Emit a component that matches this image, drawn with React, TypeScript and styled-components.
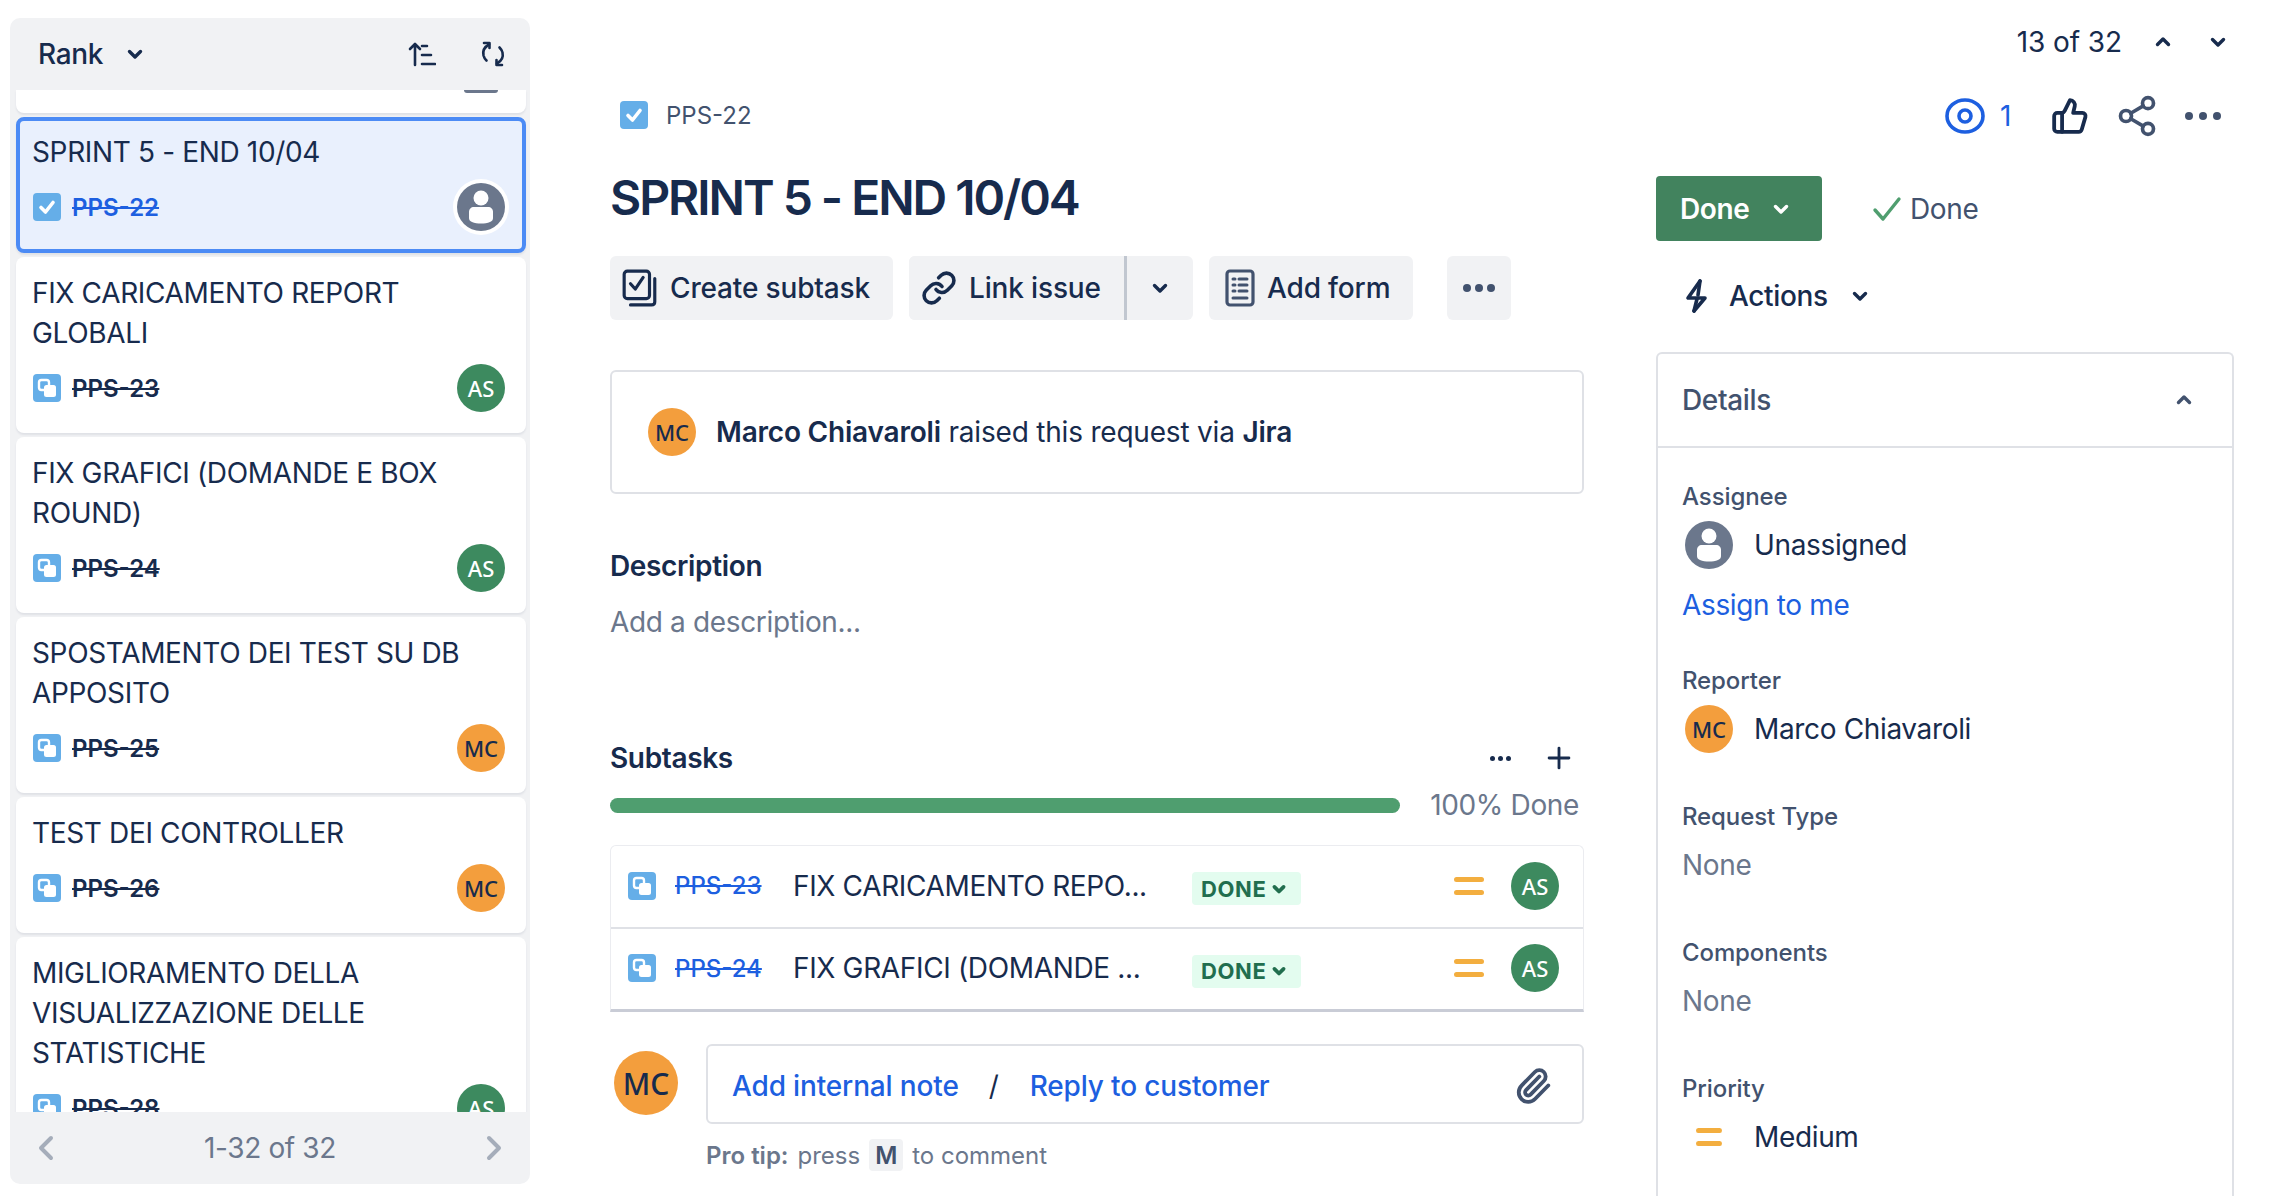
import React from "react";
import styled, { createGlobalStyle } from "styled-components";
import { Link as LinkIcon, Paperclip, Plus, Share2, ThumbsUp } from "lucide-react";

const navy = "#172b4d";
const slate = "#42526e";
const grey = "#6b778c";
const blue = "#1d5fe0";

const GlobalStyle = createGlobalStyle`
  html, body {
    margin: 0;
    height: 100%;
    background: #ffffff;
    overflow: hidden;
  }
  body {
    font-family: Inter, "Liberation Sans", sans-serif;
    color: ${navy};
    letter-spacing: -0.35px;
  }
`;

const Page = styled.div`
  display: flex;
  width: 2292px;
  height: 1196px;
  overflow: hidden;
`;

const Sidebar = styled.aside`
  width: 520px;
  height: 1166px;
  margin: 18px 0 0 10px;
  display: flex;
  flex-direction: column;
  flex: none;
  background: #f1f2f4;
  border-radius: 10px;
  overflow: hidden;
`;

const SideHeader = styled.div`
  height: 72px;
  flex: none;
  display: flex;
  align-items: center;
  padding: 0 24px 0 28px;
  font-size: 28px;
  color: ${navy};
`;

const SortButton = styled.div`
  display: flex;
  align-items: center;
  gap: 20px;
  font-weight: 500;
  margin-right: auto;
`;

const HeaderIcons = styled.div`
  display: flex;
  align-items: center;
  gap: 44px;
`;

const CardScroller = styled.div`
  flex: 1;
  min-height: 0;
  overflow: hidden;
  display: flex;
  flex-direction: column;
  gap: 4px;
  padding: 0 4px 0 6px;
`;

const PartialCard = styled.div`
  height: 23px;
  flex: none;
  background: #fff;
  border-radius: 0 0 8px 8px;
  box-shadow: 0 2px 2px #dfe1e6;
  display: flex;
  justify-content: flex-end;
  padding-right: 28px;
`;

const PartialAvatar = styled.div`
  width: 34px;
  height: 3px;
  background: ${grey};
  border-radius: 0 0 17px 17px;
`;

const Card = styled.div<{ $selected?: boolean }>`
  flex: none;
  box-sizing: border-box;
  padding: ${(p) => (p.$selected ? "11px 13px 18px 12px" : "16px 21px 21px 16px")};
  border-radius: 8px;
  background: ${(p) => (p.$selected ? "#e9f0fd" : "#fff")};
  border: ${(p) => (p.$selected ? "4px solid #4c8bf5" : "none")};
  box-shadow: 0 2px 2px #dfe1e6;
`;

const CardTitle = styled.div`
  font-size: 28px;
  line-height: 40px;
  color: ${navy};
`;

const CardFooter = styled.div`
  display: flex;
  align-items: center;
  margin-top: 11px;
  height: 48px;
  padding-left: 1px;
`;

const CardKey = styled.span<{ $blue?: boolean }>`
  font-size: 24px;
  font-weight: 600;
  letter-spacing: 0;
  margin-left: 11px;
  text-decoration: line-through;
  color: ${(p) => (p.$blue ? blue : navy)};
`;

const Avatar = styled.div<{ $bg: string; $size?: number; $font?: number; $color?: string }>`
  width: ${(p) => p.$size ?? 48}px;
  height: ${(p) => p.$size ?? 48}px;
  border-radius: 50%;
  background: ${(p) => p.$bg};
  color: ${(p) => p.$color ?? navy};
  font-family: "Noto Sans", sans-serif;
  font-size: ${(p) => p.$font ?? 22}px;
  font-weight: 500;
  letter-spacing: 0;
  display: flex;
  align-items: center;
  justify-content: center;
  flex: none;
`;

const PushRight = styled.div`
  margin-left: auto;
  display: flex;
`;

const SideFooter = styled.div`
  height: 72px;
  flex: none;
  display: flex;
  align-items: center;
  justify-content: space-between;
  padding: 0 28px 0 28px;
  font-size: 28px;
  color: ${grey};
`;

const Content = styled.main`
  flex: 1;
  min-width: 0;
  padding: 0 58px 0 80px;
`;

const PagerRow = styled.div`
  height: 42px;
  padding-top: 21px;
  display: flex;
  justify-content: flex-end;
  align-items: center;
  gap: 29px;
  font-size: 28px;
  letter-spacing: -0.1px;
`;

const PagerChevrons = styled.div`
  display: flex;
  align-items: center;
  gap: 31px;
  padding-right: 4px;
`;

const TopRow = styled.div`
  height: 50px;
  margin-top: 28px;
  display: flex;
  align-items: center;
  justify-content: space-between;
`;

const KeyCrumb = styled.div`
  display: flex;
  align-items: center;
  gap: 18px;
  padding: 0 0 2px 10px;
  font-size: 24px;
  letter-spacing: 0;
  color: ${slate};
`;

const TopActions = styled.div`
  display: flex;
  align-items: center;
  padding-right: 13px;
`;

const WatchCount = styled.span`
  color: ${blue};
  font-size: 28px;
  margin: 0 40px 0 15px;
`;

const Columns = styled.div`
  display: flex;
  gap: 72px;
  margin-top: 29px;
`;

const MainColumn = styled.div`
  width: 974px;
  flex: none;
`;

const Title = styled.h1`
  margin: 0;
  font-size: 48px;
  line-height: 56px;
  font-weight: 600;
  letter-spacing: -2.05px;
  color: ${navy};
`;

const ButtonRow = styled.div`
  display: flex;
  gap: 16px;
  margin-top: 30px;
`;

const ToolButton = styled.div<{ $width: number; $left?: number }>`
  width: ${(p) => p.$width}px;
  height: 64px;
  box-sizing: border-box;
  background: #f1f2f4;
  border-radius: 6px;
  display: flex;
  align-items: center;
  gap: 12px;
  padding-left: ${(p) => p.$left ?? 12}px;
  font-size: 28px;
  font-weight: 500;
  letter-spacing: -0.15px;
  color: ${navy};
`;

const SplitButton = styled.div`
  display: flex;
  background: #f1f2f4;
  border-radius: 6px;
`;

const SplitMain = styled(ToolButton)`
  border-right: 3px solid #c1c7d0;
  border-radius: 6px 0 0 6px;
`;

const SplitChevron = styled.div`
  width: 66px;
  display: flex;
  align-items: center;
  justify-content: center;
`;

const MoreButton = styled(ToolButton)`
  margin-left: 18px;
  justify-content: center;
  padding-left: 0;
`;

const RaisedBox = styled.div`
  height: 124px;
  box-sizing: border-box;
  margin-top: 50px;
  border: 2px solid #dfe1e6;
  border-radius: 6px;
  display: flex;
  align-items: center;
  gap: 20px;
  padding-left: 36px;
  font-size: 28px;
  letter-spacing: -0.2px;
`;

const Strong = styled.strong`
  font-weight: 600;
`;

const SectionTitle = styled.h2`
  margin: 52px 0 0;
  font-size: 28px;
  line-height: 40px;
  font-weight: 600;
`;

const Placeholder = styled.div`
  margin-top: 16px;
  font-size: 28px;
  line-height: 40px;
  color: ${grey};
`;

const SubtasksHead = styled.div`
  display: flex;
  align-items: center;
  justify-content: space-between;
  margin-top: 96px;
  height: 40px;
`;

const SubtasksTitle = styled(SectionTitle)`
  margin: 0;
`;

const SubtasksTools = styled.div`
  display: flex;
  align-items: center;
  gap: 31px;
  padding-right: 8px;
`;

const ProgressRow = styled.div`
  display: flex;
  align-items: center;
  justify-content: space-between;
  margin-top: 7px;
  height: 40px;
`;

const ProgressBar = styled.div`
  width: 790px;
  height: 15px;
  border-radius: 8px;
  background: #4f9e6f;
`;

const ProgressText = styled.span`
  font-size: 28px;
  color: ${grey};
  padding-right: 5px;
`;

const SubtaskTable = styled.div`
  margin-top: 20px;
  border: 1px solid #ebecf0;
  border-bottom: 3px solid #c9ccd6;
  border-radius: 6px 6px 0 0;
`;

const SubtaskRow = styled.div`
  height: 81px;
  box-sizing: border-box;
  display: flex;
  align-items: center;
  padding: 0 24px 2px 17px;
  & + & {
    height: 82px;
    border-top: 2px solid #dfe1e6;
  }
`;

const SubtaskKey = styled.span`
  width: 118px;
  margin-left: 19px;
  font-size: 24px;
  font-weight: 500;
  letter-spacing: 0;
  color: ${blue};
  text-decoration: line-through;
  flex: none;
`;

const SubtaskName = styled.span`
  width: 399px;
  flex: none;
  font-size: 28px;
  white-space: nowrap;
`;

const StatusPill = styled.span`
  display: inline-flex;
  align-items: center;
  gap: 3px;
  height: 33px;
  padding: 0 12px 0 9px;
  margin-top: 6px;
  background: #e3fcef;
  border-radius: 4px;
  color: #216e4e;
  font-size: 22px;
  font-weight: 700;
  letter-spacing: 0.6px;
`;

const RowEnd = styled.div`
  margin-left: auto;
  display: flex;
  align-items: center;
  gap: 27px;
`;

const CommentArea = styled.div`
  display: flex;
  gap: 28px;
  margin-top: 32px;
  padding-left: 4px;
`;

const CommentAvatar = styled(Avatar)`
  margin-top: 7px;
`;

const CommentColumn = styled.div`
  flex: 1;
`;

const CommentBox = styled.div`
  height: 80px;
  box-sizing: border-box;
  border: 2px solid #dfe1e6;
  border-radius: 6px;
  display: flex;
  align-items: center;
  padding: 4px 30px 0 24px;
  font-size: 28px;
  font-weight: 500;
  letter-spacing: -0.15px;
  color: ${blue};
`;

const Slash = styled.span`
  margin: 0 31px 0 30px;
  color: ${navy};
  font-weight: 400;
`;

const ClipSlot = styled.div`
  margin-left: auto;
  display: flex;
`;

const ProTip = styled.div`
  margin-top: 15px;
  display: flex;
  align-items: center;
  gap: 9px;
  font-size: 24px;
  letter-spacing: 0;
  color: ${grey};
`;

const Kbd = styled.span`
  min-width: 34px;
  height: 32px;
  background: #f1f2f4;
  border-radius: 4px;
  display: inline-flex;
  align-items: center;
  justify-content: center;
  font-weight: 600;
  color: ${slate};
`;

const RightColumn = styled.div`
  flex: 1;
  min-width: 0;
`;

const StatusRow = styled.div`
  display: flex;
  align-items: center;
  height: 65px;
  margin-top: 6px;
`;

const DoneButton = styled.div`
  width: 166px;
  height: 65px;
  background: #42835e;
  border-radius: 4px;
  color: #fff;
  font-size: 28px;
  font-weight: 600;
  display: flex;
  align-items: center;
  gap: 19px;
  box-sizing: border-box;
  padding-left: 24px;
`;

const Resolution = styled.div`
  display: flex;
  align-items: center;
  gap: 8px;
  margin-left: 50px;
  font-size: 28px;
  color: ${slate};
`;

const ActionsRow = styled.div`
  display: flex;
  align-items: center;
  height: 50px;
  margin-top: 30px;
  padding-left: 29px;
  font-size: 28px;
  font-weight: 500;
`;

const ActionsLabel = styled.span`
  margin: 0 20px 0 18px;
`;

const DetailsPanel = styled.section`
  margin-top: 31px;
  border: 2px solid #dfe1e6;
  border-bottom: none;
  border-radius: 6px 6px 0 0;
  height: 900px;
`;

const DetailsHead = styled.div`
  height: 94px;
  box-sizing: border-box;
  border-bottom: 2px solid #dfe1e6;
  display: flex;
  align-items: center;
  justify-content: space-between;
  padding: 0 36px 0 24px;
  font-size: 28px;
  font-weight: 500;
  color: ${slate};
`;

const DetailsBody = styled.div`
  padding: 33px 24px 0;
`;

const Field = styled.div`
  & + & {
    margin-top: 47px;
  }
`;

const FieldLabel = styled.div`
  font-size: 24px;
  line-height: 32px;
  font-weight: 500;
  letter-spacing: -0.1px;
  color: ${slate};
`;

const FieldValue = styled.div`
  display: flex;
  align-items: center;
  gap: 21px;
  height: 50px;
  margin-top: 7px;
  font-size: 28px;
  padding-left: 3px;
`;

const EmptyValue = styled.div`
  height: 50px;
  margin-top: 7px;
  display: flex;
  align-items: center;
  font-size: 28px;
  color: ${grey};
`;

const AssignLink = styled.div`
  font-size: 28px;
  line-height: 26px;
  margin-top: 22px;
  color: ${blue};
`;

const PrioritySlot = styled.div`
  width: 48px;
  display: flex;
  justify-content: center;
`;

const Chevron = ({ dir = "down", size = 24, color = navy, w = 3.4 }: { dir?: "down" | "up"; size?: number; color?: string; w?: number }) => (
  <svg width={size} height={size} viewBox="0 0 24 24" fill="none">
    <path
      d={dir === "down" ? "M6.5 9.5 12 15l5.5-5.5" : "M6.5 14.5 12 9l5.5 5.5"}
      stroke={color}
      strokeWidth={w}
      strokeLinecap="round"
      strokeLinejoin="round"
    />
  </svg>
);

const Side = ({ dir }: { dir: "left" | "right" }) => (
  <svg width="16" height="26" viewBox="0 0 16 26" fill="none">
    <path
      d={dir === "left" ? "M13 3 3 13l10 10" : "M3 3l10 10L3 23"}
      stroke="#a5adba"
      strokeWidth="4"
      strokeLinecap="round"
      strokeLinejoin="round"
    />
  </svg>
);

const SortIcon = () => (
  <svg width="28" height="26" viewBox="0 0 28 26" fill="none" stroke={navy} strokeWidth="2.6" strokeLinecap="round">
    <path d="M7 24V3M2 8l5-5 5 5" strokeLinejoin="round" />
    <path d="M14 5h5M14 14h9M14 23h13" />
  </svg>
);

const RefreshIcon = () => (
  <svg width="26" height="26" viewBox="0 0 26 26" fill="none" stroke={navy} strokeWidth="2.6" strokeLinecap="round" strokeLinejoin="round">
    <path d="M9 3.5C4.5 6 2.500 10 3.500 14.500c.5 2 1.500 3.500 3 5" />
    <path d="M4 2h5.500v5" />
    <path d="M17 22.500c4.500-2.500 6.500-6.500 5.500-11-.5-2-1.500-3.500-3-5" />
    <path d="M22 24h-5.500v-5" />
  </svg>
);

const CheckTile = ({ size = 28 }: { size?: number }) => (
  <svg width={size} height={size} viewBox="0 0 28 28" fill="none">
    <rect width="28" height="28" rx="4" fill="#65aee8" />
    <path d="M8 14.500 12.500 19 20 9.500" stroke="#fff" strokeWidth="3.600" strokeLinecap="round" strokeLinejoin="round" />
  </svg>
);

const SubtaskTile = () => (
  <svg width="28" height="28" viewBox="0 0 28 28" fill="none" style={{ flex: "none" }}>
    <rect width="28" height="28" rx="4" fill="#65aee8" />
    <rect x="6" y="6" width="10" height="10" rx="2.500" fill="#65aee8" stroke="#fff" strokeWidth="2.400" />
    <rect x="11" y="11" width="12" height="12" rx="2.500" fill="#fff" />
  </svg>
);

const PersonAvatar = ({ ring }: { ring?: boolean }) => (
  <svg width={ring ? 56 : 48} height={ring ? 56 : 48} viewBox={ring ? "0 0 56 56" : "4 4 48 48"}>
    {ring && <circle cx="28" cy="28" r="28" fill="#fff" />}
    <circle cx="28" cy="28" r="24" fill={grey} />
    <circle cx="28" cy="19" r="7.500" fill="#fff" />
    <path d="M16 33c0-3 2-5 5-5h14c3 0 5 2 5 5v6c0 2-1 3-3 4-5 2-13 2-18 0-2-1-3-2-3-4z" fill="#fff" />
  </svg>
);

const SubtaskActionIcon = () => (
  <svg width="36" height="38" viewBox="0 0 34 36" fill="none" stroke={navy} strokeWidth="3" strokeLinejoin="round">
    <rect x="2" y="2" width="24" height="26" rx="3" />
    <path d="M8 14l4.500 5L20 8" strokeLinecap="round" />
    <path d="M31 9v22c0 2-1 3-3 3H8" strokeLinecap="round" />
  </svg>
);

const FormIcon = () => (
  <svg width="30" height="38" viewBox="0 0 30 38" fill="none">
    <rect x="2" y="2" width="26" height="34" rx="3" stroke={slate} strokeWidth="3.200" />
    <path d="M8 10h2M14 10h8M8 16h2M14 16h8M8 22h2M14 22h8M8 29h14" stroke={slate} strokeWidth="3" strokeLinecap="round" />
  </svg>
);

const Dots = ({ size = 6, color = navy, gap = 5 }: { size?: number; color?: string; gap?: number }) => {
  const step = size + gap;
  return (
    <svg width={step * 3 - gap} height={size} viewBox={`0 0 ${step * 3 - gap} ${size}`}>
      {[0, 1, 2].map((i) => (
        <circle key={i} cx={size / 2 + i * step} cy={size / 2} r={size / 2} fill={color} />
      ))}
    </svg>
  );
};

const EyeIcon = () => (
  <svg width="40" height="36" viewBox="0 0 40 36" fill="none" stroke={blue}>
    <ellipse cx="20" cy="18" rx="18" ry="16" strokeWidth="3.600" />
    <circle cx="20" cy="18" r="6" strokeWidth="3.600" />
  </svg>
);

const BoltIcon = () => (
  <svg width="26" height="36" viewBox="0 0 26 36" fill="none" stroke={navy} strokeWidth="3.600" strokeLinecap="round" strokeLinejoin="round">
    <path d="M15 3 3 20h17L9 33" />
    <path d="M15 3 13 17" />
    <path d="M12 21 9 33" />
  </svg>
);

const CheckMark = () => (
  <svg width="30" height="26" viewBox="0 0 30 26" fill="none">
    <path d="M3 14l8 9L27 3" stroke="#4f9e6f" strokeWidth="3.400" strokeLinecap="round" strokeLinejoin="round" />
  </svg>
);

const MediumPriority = ({ width = 30 }: { width?: number }) => (
  <svg width={width} height="24" viewBox="0 0 30 24" preserveAspectRatio="none">
    <rect y="3" width="30" height="5" rx="2.500" fill="#f3ae3f" />
    <rect y="16" width="30" height="5" rx="2.500" fill="#f3ae3f" />
  </svg>
);

const issues = [
  { title: "FIX CARICAMENTO REPORT\nGLOBALI", key: "PPS-23", who: "AS" },
  { title: "FIX GRAFICI (DOMANDE E BOX\nROUND)", key: "PPS-24", who: "AS" },
  { title: "SPOSTAMENTO DEI TEST SU DB\nAPPOSITO", key: "PPS-25", who: "MC" },
  { title: "TEST DEI CONTROLLER", key: "PPS-26", who: "MC" },
  { title: "MIGLIORAMENTO DELLA\nVISUALIZZAZIONE DELLE\nSTATISTICHE", key: "PPS-28", who: "AS" },
];

const subtasks = [
  { key: "PPS-23", name: "FIX CARICAMENTO REPO..." },
  { key: "PPS-24", name: "FIX GRAFICI (DOMANDE ..." },
];

const WhoAvatar = ({ who }: { who: string }) =>
  who === "AS" ? (
    <Avatar $bg="#3d8a5f" $color="#fff">
      AS
    </Avatar>
  ) : (
    <Avatar $bg="#f39e3d">MC</Avatar>
  );

const App: React.FC = () => {
  return (
    <Page>
      <GlobalStyle />
      <Sidebar>
        <SideHeader>
          <SortButton>
            Rank
            <Chevron />
          </SortButton>
          <HeaderIcons>
            <SortIcon />
            <RefreshIcon />
          </HeaderIcons>
        </SideHeader>
        <CardScroller>
          <PartialCard>
            <PartialAvatar />
          </PartialCard>
          <Card $selected>
            <CardTitle>SPRINT 5 - END 10/04</CardTitle>
            <CardFooter>
              <CheckTile />
              <CardKey $blue>PPS-22</CardKey>
              <PushRight>
                <PersonAvatar ring />
              </PushRight>
            </CardFooter>
          </Card>
          {issues.map((issue) => (
            <Card key={issue.key}>
              <CardTitle>
                {issue.title.split("\n").map((line) => (
                  <div key={line}>{line}</div>
                ))}
              </CardTitle>
              <CardFooter>
                <SubtaskTile />
                <CardKey>{issue.key}</CardKey>
                <PushRight>
                  <WhoAvatar who={issue.who} />
                </PushRight>
              </CardFooter>
            </Card>
          ))}
        </CardScroller>
        <SideFooter>
          <Side dir="left" />
          1-32 of 32
          <Side dir="right" />
        </SideFooter>
      </Sidebar>

      <Content>
        <PagerRow>
          13 of 32
          <PagerChevrons>
            <Chevron dir="up" />
            <Chevron />
          </PagerChevrons>
        </PagerRow>
        <TopRow>
          <KeyCrumb>
            <CheckTile />
            PPS-22
          </KeyCrumb>
          <TopActions>
            <EyeIcon />
            <WatchCount>1</WatchCount>
            <ThumbsUp size={38} color={navy} strokeWidth={2.4} />
            <Share2 size={44} color={slate} strokeWidth={2} style={{ margin: "0 26px" }} />
            <Dots size={8} gap={6} color={slate} />
          </TopActions>
        </TopRow>
        <Columns>
          <MainColumn>
            <Title>SPRINT 5 - END 10/04</Title>
            <ButtonRow>
              <ToolButton $width={283}>
                <SubtaskActionIcon />
                Create subtask
              </ToolButton>
              <SplitButton>
                <SplitMain $width={218}>
                  <LinkIcon size={36} color={navy} strokeWidth={2.4} />
                  Link issue
                </SplitMain>
                <SplitChevron>
                  <Chevron />
                </SplitChevron>
              </SplitButton>
              <ToolButton $width={204} $left={16}>
                <FormIcon />
                Add form
              </ToolButton>
              <MoreButton $width={64}>
                <Dots size={8} gap={4} color={slate} />
              </MoreButton>
            </ButtonRow>
            <RaisedBox>
              <Avatar $bg="#f39e3d">MC</Avatar>
              <span>
                <Strong>Marco Chiavaroli</Strong> raised this request via <Strong>Jira</Strong>
              </span>
            </RaisedBox>
            <SectionTitle>Description</SectionTitle>
            <Placeholder>Add a description...</Placeholder>
            <SubtasksHead>
              <SubtasksTitle>Subtasks</SubtasksTitle>
              <SubtasksTools>
                <Dots size={5} gap={3} />
                <Plus size={34} color={navy} strokeWidth={2} />
              </SubtasksTools>
            </SubtasksHead>
            <ProgressRow>
              <ProgressBar />
              <ProgressText>100% Done</ProgressText>
            </ProgressRow>
            <SubtaskTable>
              {subtasks.map((task) => (
                <SubtaskRow key={task.key}>
                  <SubtaskTile />
                  <SubtaskKey>{task.key}</SubtaskKey>
                  <SubtaskName>{task.name}</SubtaskName>
                  <StatusPill>
                    DONE
                    <Chevron size={20} color="#216e4e" w={4.5} />
                  </StatusPill>
                  <RowEnd>
                    <MediumPriority />
                    <WhoAvatar who="AS" />
                  </RowEnd>
                </SubtaskRow>
              ))}
            </SubtaskTable>
            <CommentArea>
              <CommentAvatar $bg="#f39e3d" $size={64} $font={30}>
                MC
              </CommentAvatar>
              <CommentColumn>
                <CommentBox>
                  Add internal note
                  <Slash>/</Slash>
                  Reply to customer
                  <ClipSlot>
                    <Paperclip size={38} color={slate} strokeWidth={2.4} />
                  </ClipSlot>
                </CommentBox>
                <ProTip>
                  <Strong>Pro tip:</Strong> press <Kbd>M</Kbd> to comment
                </ProTip>
              </CommentColumn>
            </CommentArea>
          </MainColumn>
          <RightColumn>
            <StatusRow>
              <DoneButton>
                Done
                <Chevron color="#fff" />
              </DoneButton>
              <Resolution>
                <CheckMark />
                Done
              </Resolution>
            </StatusRow>
            <ActionsRow>
              <BoltIcon />
              <ActionsLabel>Actions</ActionsLabel>
              <Chevron />
            </ActionsRow>
            <DetailsPanel>
              <DetailsHead>
                Details
                <Chevron dir="up" color={slate} />
              </DetailsHead>
              <DetailsBody>
                <Field>
                  <FieldLabel>Assignee</FieldLabel>
                  <FieldValue>
                    <PersonAvatar />
                    Unassigned
                  </FieldValue>
                  <AssignLink>Assign to me</AssignLink>
                </Field>
                <Field>
                  <FieldLabel>Reporter</FieldLabel>
                  <FieldValue>
                    <Avatar $bg="#f39e3d">MC</Avatar>
                    Marco Chiavaroli
                  </FieldValue>
                </Field>
                <Field>
                  <FieldLabel>Request Type</FieldLabel>
                  <EmptyValue>None</EmptyValue>
                </Field>
                <Field>
                  <FieldLabel>Components</FieldLabel>
                  <EmptyValue>None</EmptyValue>
                </Field>
                <Field>
                  <FieldLabel>Priority</FieldLabel>
                  <FieldValue>
                    <PrioritySlot>
                      <MediumPriority width={26} />
                    </PrioritySlot>
                    Medium
                  </FieldValue>
                </Field>
              </DetailsBody>
            </DetailsPanel>
          </RightColumn>
        </Columns>
      </Content>
    </Page>
  );
};

export default App;
